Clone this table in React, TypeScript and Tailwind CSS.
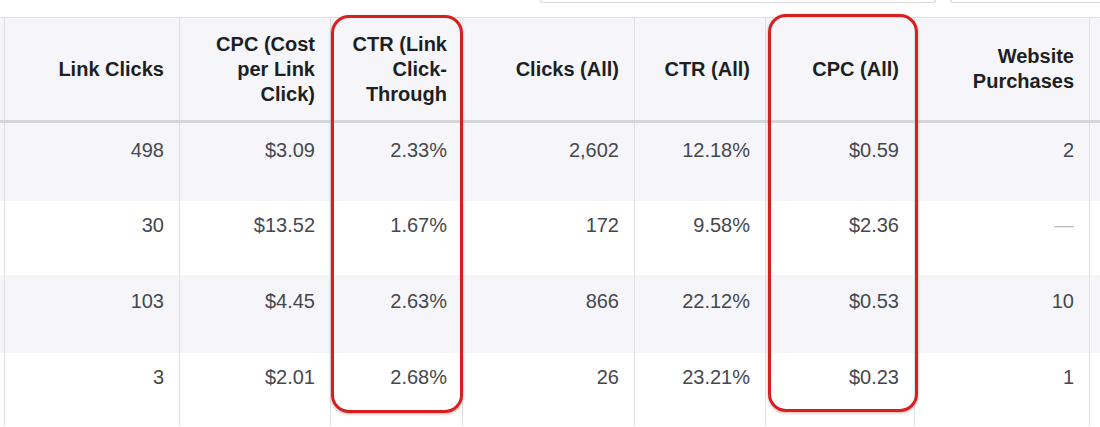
import React from 'react';

type Row = { cells: string[]; bg: string; h: string; pt: string };

const COLS = 'grid-cols-[5px_175px_151px_132px_172px_131px_149px_175px_1fr]';

const headers: React.ReactNode[] = [
    'Link Clicks',
    <>CPC (Cost<br />per Link<br />Click)</>,
    <>CTR (Link<br />Click-<br />Through</>,
    'Clicks (All)',
    'CTR (All)',
    'CPC (All)',
    <>Website<br />Purchases</>,
];

const rows: Row[] = [
    { cells: ['498', '$3.09', '2.33%', '2,602', '12.18%', '$0.59', '2'], bg: 'bg-[#f6f6fa]', h: 'h-[78px]', pt: 'pt-[15px]' },
    { cells: ['30', '$13.52', '1.67%', '172', '9.58%', '$2.36', '—'], bg: 'bg-white', h: 'h-[74px]', pt: 'pt-[12px]' },
    { cells: ['103', '$4.45', '2.63%', '866', '22.12%', '$0.53', '10'], bg: 'bg-[#f6f6fa]', h: 'h-[78px]', pt: 'pt-[14px]' },
    { cells: ['3', '$2.01', '2.68%', '26', '23.21%', '$0.23', '1'], bg: 'bg-white', h: 'h-[73px]', pt: 'pt-[12px]' },
];

export default function App() {
    return (
        <div
            className="relative w-[1100px] h-[427px] overflow-hidden bg-white"
            style={{ fontFamily: '"Liberation Sans", Arial, sans-serif' }}
        >
            {/* toolbar inputs cut off at the top */}
            <div className="flex h-[17px] gap-[14px] pl-[540px]">
                <div className="w-[396px] h-[3px] rounded-b-[3px] border-b border-x border-[#d6d7dc]" />
                <div className="flex-1 h-[3px] rounded-bl-[3px] border-b border-l border-[#d6d7dc]" />
            </div>

            {/* header */}
            <div className={`grid ${COLS} h-[106px] bg-[#f6f6fa] border-t border-[#e0e1e5] border-b-[3px] border-b-[#d5d6da] shadow-[0_1px_2px_rgba(0,0,0,0.08)]`}>
                <div className="border-r border-[#dfe0e4]" />
                {headers.map((h, i) => (
                    <div
                        key={i}
                        className="flex items-center justify-end pr-[15px] border-r border-[#dfe0e4] text-right text-[20px] leading-[25px] font-bold text-[#1d1f23]"
                    >
                        <span>{h}</span>
                    </div>
                ))}
                <div />
            </div>

            {/* body */}
            {rows.map((r, ri) => (
                <div key={ri} className={`grid ${COLS} ${r.h} ${r.bg}`}>
                    <div className="border-r border-[#dfe0e4]" />
                    {r.cells.map((c, ci) => (
                        <div
                            key={ci}
                            className={`${r.pt} pr-[15px] border-r border-[#dfe0e4] text-right text-[20px] leading-[24px] ${c === '—' ? 'text-[#b8b9bd]' : 'text-[#45484e]'}`}
                        >
                            {c}
                        </div>
                    ))}
                    <div />
                </div>
            ))}

            {/* red highlight annotations */}
            <div className="absolute left-[331px] top-[15px] w-[132px] h-[398px] rounded-[18px] border-[3px] border-[#d81f1f] shadow-[0_1px_3px_rgba(150,0,0,0.35)]" />
            <div className="absolute left-[768px] top-[14px] w-[150px] h-[398px] rounded-[18px] border-[3px] border-[#d81f1f] shadow-[0_1px_3px_rgba(150,0,0,0.35)]" />
        </div>
    );
}
